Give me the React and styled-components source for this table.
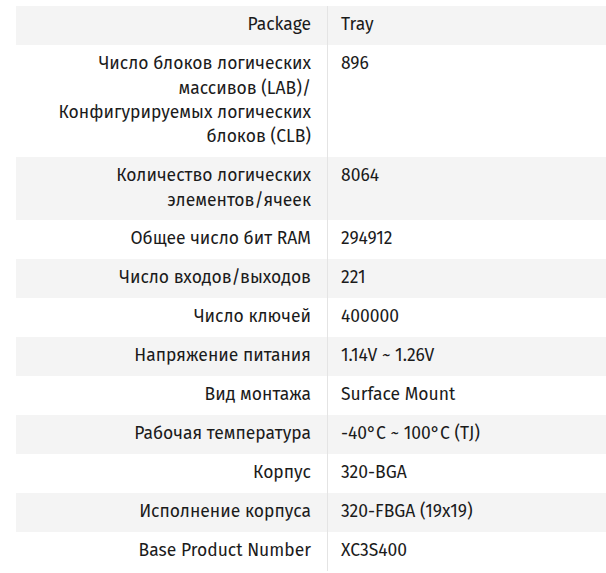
import React from 'react'
import styled, { createGlobalStyle } from 'styled-components'

const GlobalStyle = createGlobalStyle`
  body {
    margin: 0;
    background: #fff;
    font-family: 'Fira Sans', 'Noto Sans', sans-serif;
  }
`

const Wrapper = styled.div`
  padding: 6px 0 0 16px;
`

const Table = styled.table`
  width: 590px;
  border-collapse: collapse;
  font-size: 17.5px;
  line-height: 24.3px;
  color: #1b1b1b;
`

const Row = styled.tr`
  background: ${props => (props.shaded ? '#f4f4f4' : '#fff')};
`

const Label = styled.th`
  width: 263px;
  padding: 7.35px 16px 7.35px 32px;
  text-align: right;
  vertical-align: top;
  font-weight: 400;
  border-right: 1px solid #e4e4e4;
`

const Value = styled.td`
  padding: 7.35px 0 7.35px 13px;
  text-align: left;
  vertical-align: top;
`

const specs = [
  ['Package', 'Tray'],
  ['Число блоков логических массивов (LAB)/ Конфигурируемых логических блоков (CLB)', '896'],
  ['Количество логических элементов/ячеек', '8064'],
  ['Общее число бит RAM', '294912'],
  ['Число входов/выходов', '221'],
  ['Число ключей', '400000'],
  ['Напряжение питания', '1.14V ~ 1.26V'],
  ['Вид монтажа', 'Surface Mount'],
  ['Рабочая температура', '-40°C ~ 100°C (TJ)'],
  ['Корпус', '320-BGA'],
  ['Исполнение корпуса', '320-FBGA (19x19)'],
  ['Base Product Number', 'XC3S400'],
]

const App = () => {
  return (
    <Wrapper>
      <GlobalStyle />
      <Table>
        <tbody>
          {specs.map(([name, value], i) => (
            <Row key={name} shaded={i % 2 === 0}>
              <Label>{name}</Label>
              <Value>{value}</Value>
            </Row>
          ))}
        </tbody>
      </Table>
    </Wrapper>
  )
}

export default App
